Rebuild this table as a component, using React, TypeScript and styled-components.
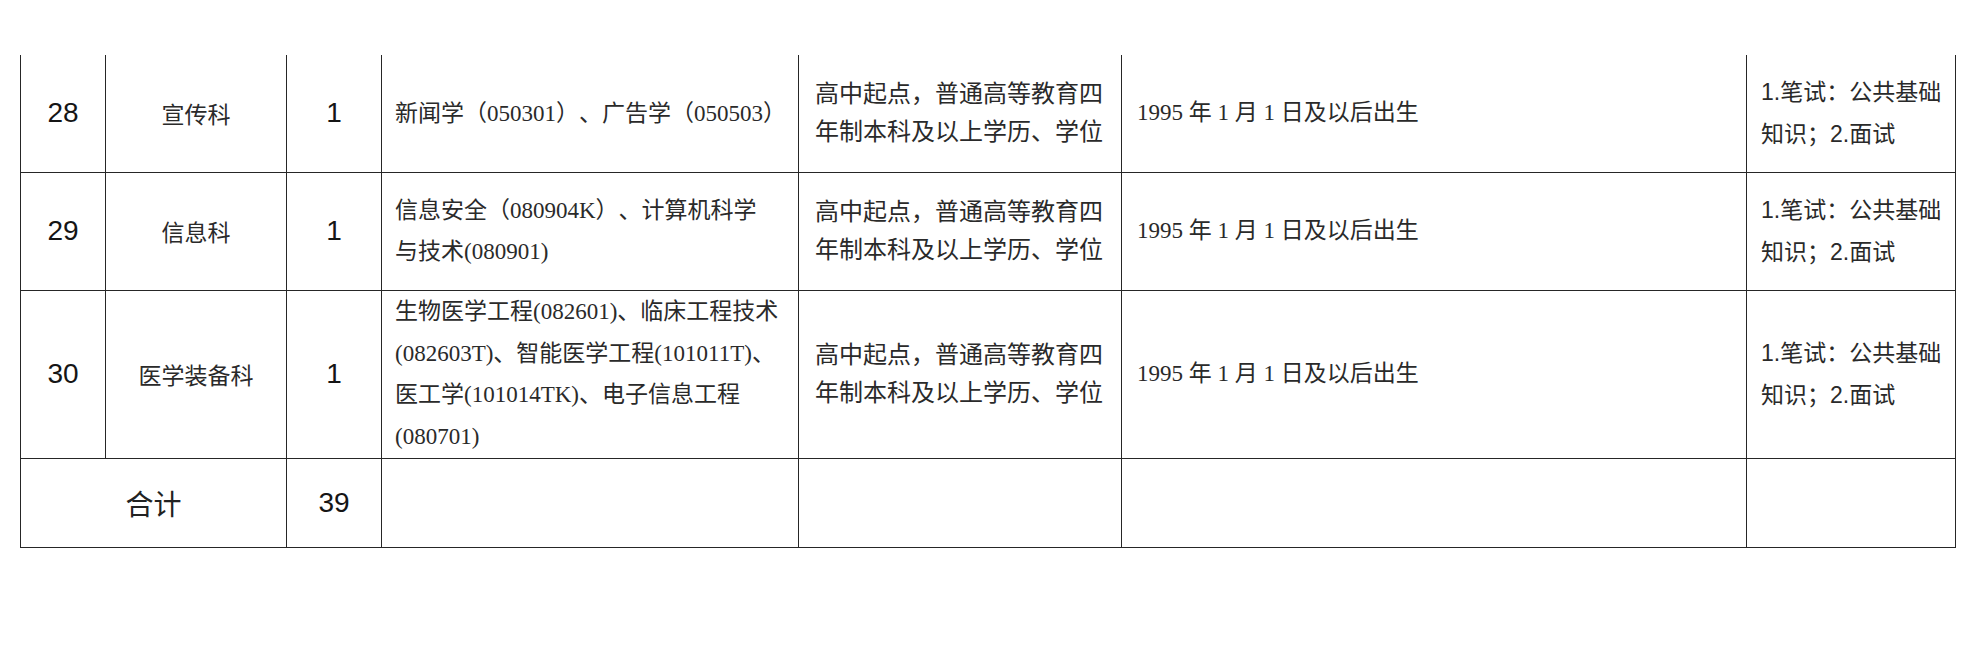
import React from 'react'
import styled, { createGlobalStyle } from 'styled-components'

const GlobalStyle = createGlobalStyle`
  html, body {
    margin: 0;
    padding: 0;
    background: #fff;
  }
`

const Page = styled.div`
  padding: 55px 0 0 20px;
  width: 1966px;
  height: 659px;
  box-sizing: border-box;
  overflow: hidden;
`

const Table = styled.table`
  border-collapse: collapse;
  table-layout: fixed;
  width: 1936px;
  color: #2a2a2a;
  text-spacing-trim: space-all;
`

const Row = styled.tr<{ $height: number }>`
  height: ${(p) => p.$height}px;

  &:first-child > td {
    border-top: none;
  }
`

const Cell = styled.td`
  border: 1.5px solid #262626;
  padding: 0;
  vertical-align: middle;
`

const NumCell = styled(Cell)`
  text-align: center;
  font-family: 'Liberation Sans', Arial, sans-serif;
  font-size: 28px;
  color: #151515;
`

const DeptCell = styled(Cell)`
  text-align: center;
  font-family: 'Noto Sans CJK SC', sans-serif;
  font-size: 23px;
`

const TotalLabel = styled(Cell)`
  text-align: center;
  font-family: 'Noto Sans CJK SC', sans-serif;
  font-size: 28px;
  color: #222;
`

const TextCell = styled(Cell)<{ $lineHeight: number; $padLeft: number; $size: number; $sans?: boolean }>`
  padding-left: ${(p) => p.$padLeft}px;
  font-family: ${(p) => (p.$sans ? "'Liberation Sans'" : "'Liberation Serif'")}, 'Noto Sans CJK SC', sans-serif;
  font-size: ${(p) => p.$size}px;
  line-height: ${(p) => p.$lineHeight}px;
  white-space: nowrap;
  text-align: left;
  text-spacing-trim: space-all;
`

const Line = styled.div``

interface Entry {
  no: string
  dept: string
  count: string
  major: string[]
  edu: string[]
  birth: string
  exam: string[]
  height: number
}

const edu = ['高中起点，普通高等教育四', '年制本科及以上学历、学位']
const exam = ['1.笔试：公共基础', '知识；2.面试']
const birth = '1995 年 1 月 1 日及以后出生'

const entries: Entry[] = [
  {
    no: '28',
    dept: '宣传科',
    count: '1',
    major: ['新闻学（050301）、广告学（050503）'],
    edu,
    birth,
    exam,
    height: 117,
  },
  {
    no: '29',
    dept: '信息科',
    count: '1',
    major: ['信息安全（080904K）、计算机科学', '与技术(080901)'],
    edu,
    birth,
    exam,
    height: 118,
  },
  {
    no: '30',
    dept: '医学装备科',
    count: '1',
    major: [
      '生物医学工程(082601)、临床工程技术',
      '(082603T)、智能医学工程(101011T)、',
      '医工学(101014TK)、电子信息工程',
      '(080701)',
    ],
    edu,
    birth,
    exam,
    height: 168,
  },
]

const Lines: React.FC<{ items: string[] }> = ({ items }) => (
  <>
    {items.map((t, i) => (
      <Line key={i}>{t}</Line>
    ))}
  </>
)

const App: React.FC = () => {
  return (
    <Page>
      <GlobalStyle />
      <Table>
        <colgroup>
          <col style={{ width: 85 }} />
          <col style={{ width: 181 }} />
          <col style={{ width: 95 }} />
          <col style={{ width: 417 }} />
          <col style={{ width: 323 }} />
          <col style={{ width: 625 }} />
          <col style={{ width: 209 }} />
        </colgroup>
        <tbody>
          {entries.map((e) => (
            <Row key={e.no} $height={e.height}>
              <NumCell>{e.no}</NumCell>
              <DeptCell>{e.dept}</DeptCell>
              <NumCell>{e.count}</NumCell>
              <TextCell $lineHeight={41.5} $padLeft={13} $size={23}>
                <Lines items={e.major} />
              </TextCell>
              <TextCell $lineHeight={38} $padLeft={16} $size={24}>
                <Lines items={e.edu} />
              </TextCell>
              <TextCell $lineHeight={40} $padLeft={15} $size={23}>
                {e.birth}
              </TextCell>
              <TextCell $lineHeight={42} $padLeft={14} $size={23} $sans>
                <Lines items={e.exam} />
              </TextCell>
            </Row>
          ))}
          <Row $height={89}>
            <TotalLabel colSpan={2}>合计</TotalLabel>
            <NumCell>39</NumCell>
            <Cell />
            <Cell />
            <Cell />
            <Cell />
          </Row>
        </tbody>
      </Table>
    </Page>
  )
}

export default App
